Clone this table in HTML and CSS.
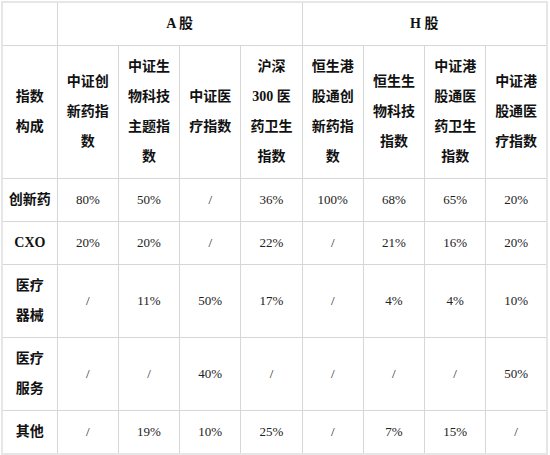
FILE: index.html
```html
<!DOCTYPE html>
<html lang="zh">
<head>
<meta charset="utf-8">
<link rel="stylesheet" href="styles.css">
</head>
<body>
<table class="tbl">
  <colgroup>
    <col class="c-first">
    <col class="c"><col class="c"><col class="c"><col class="c">
    <col class="c"><col class="c"><col class="c"><col class="c">
  </colgroup>
  <tr class="h1">
    <th></th>
    <th colspan="4">A 股</th>
    <th colspan="4">H 股</th>
  </tr>
  <tr class="h2">
    <th>指数<br>构成</th>
    <th>中证创新药指数</th>
    <th>中证生物科技主题指数</th>
    <th>中证医疗指数</th>
    <th>沪深 300 医药卫生指数</th>
    <th>恒生港股通创新药指数</th>
    <th>恒生生物科技指数</th>
    <th>中证港股通医药卫生指数</th>
    <th>中证港股通医疗指数</th>
  </tr>
  <tr>
    <th>创新药</th>
    <td>80%</td><td>50%</td><td>/</td><td>36%</td>
    <td>100%</td><td>68%</td><td>65%</td><td>20%</td>
  </tr>
  <tr>
    <th>CXO</th>
    <td>20%</td><td>20%</td><td>/</td><td>22%</td>
    <td>/</td><td>21%</td><td>16%</td><td>20%</td>
  </tr>
  <tr>
    <th>医疗<br>器械</th>
    <td>/</td><td>11%</td><td>50%</td><td>17%</td>
    <td>/</td><td>4%</td><td>4%</td><td>10%</td>
  </tr>
  <tr>
    <th>医疗<br>服务</th>
    <td>/</td><td>/</td><td>40%</td><td>/</td>
    <td>/</td><td>/</td><td>/</td><td>50%</td>
  </tr>
  <tr>
    <th>其他</th>
    <td>/</td><td>19%</td><td>10%</td><td>25%</td>
    <td>/</td><td>7%</td><td>15%</td><td>/</td>
  </tr>
</table>
</body>
</html>
```

FILE: styles.css
```css
html, body {
  margin: 0;
  padding: 0;
  background: #ffffff;
}
body {
  padding: 1px 0 0 1px;
  font-family: "Liberation Serif", "Noto Sans CJK SC", serif;
  color: #1a1a1a;
}
.tbl {
  border-collapse: collapse;
  table-layout: fixed;
  width: 547px;
  border: 2px solid #e6e6e6;
}
.c-first { width: 55px; }
.c { width: 61px; }
.tbl th,
.tbl td {
  border: 1px solid #d6d6d6;
  padding: 6px 5px;
  line-height: 30px;
  text-align: center;
  vertical-align: middle;
  font-size: 13px;
}
.tbl th {
  font-weight: bold;
  font-size: 14px;
  color: #111111;
}
.tbl td {
  font-weight: normal;
  color: #222222;
}
```
